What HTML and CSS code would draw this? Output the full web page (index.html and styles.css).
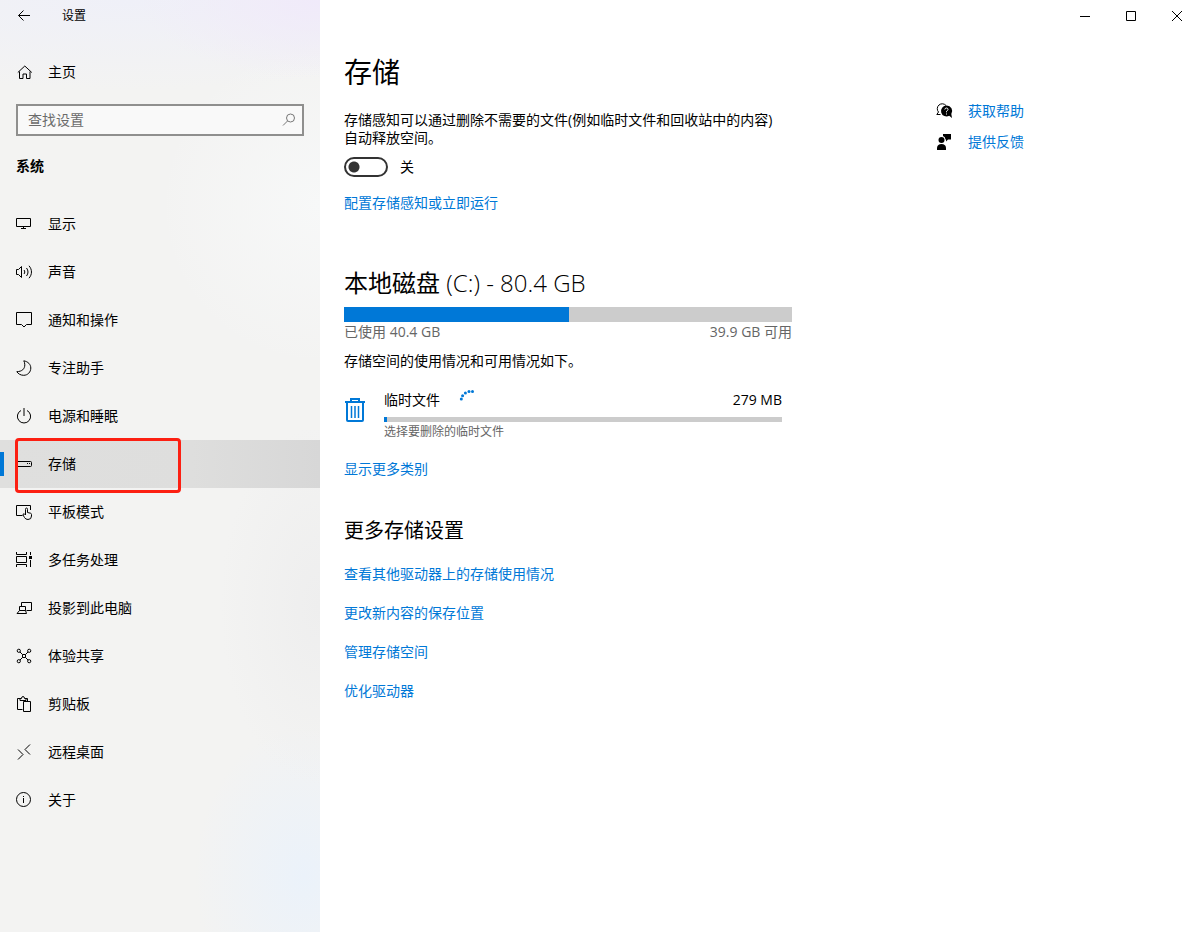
FILE: index.html
```html
<!DOCTYPE html>
<html lang="zh-CN">
<head>
    <meta charset="UTF-8">
    <meta name="viewport" content="width=device-width, initial-scale=1.0">
    <title>设置</title>
    <link rel="stylesheet" href="styles.css">
</head>
<body>

    <div class="window">
        <aside class="sidebar">
            <div class="titlebar">
                <button class="back" aria-label="返回">
                    <svg class="icon" viewBox="0 0 16 16"><path d="M14 7.500H2.500M7.500 2.500l-5 5 5 5"/></svg>
                </button>
                <span class="app-title">设置</span>
            </div>

            <a class="home" href="#">
                <svg class="icon" viewBox="0 0 16 16"><path d="M1.800 8.500L8.800 2l7 6.500M3.500 7.500v7h3.500v-4.500h3.500v4.500h3.500v-7"/></svg>
                <span>主页</span>
            </a>

            <div class="search">
                <input type="text" id="search-text" placeholder="查找设置" aria-label="查找设置">
                <button aria-label="搜索">
                    <svg class="icon" viewBox="0 0 16 16"><circle cx="10.500" cy="6" r="4"/><path d="M7.500 9L3 13.500"/></svg>
                </button>
            </div>

            <h2 class="group">系统</h2>

            <nav class="menu">
                <a href="#">
                    <svg class="icon" viewBox="0 0 16 16"><path d="M.5 2.500h14v8H.5zM7.500 10.500v2M5 12.500h5"/></svg>
                    <span>显示</span>
                </a>
                <a href="#">
                    <svg class="icon" viewBox="0 0 16 16"><path d="M.5 5.500H2.500L5.500 2.500v11l-3-3H.5zM8 6c1 1.200 1 2.800 0 4M10.500 4c2 2.400 2 5.600 0 8M13 1.800c3.300 3.700 3.300 8.700 0 12.400"/></svg>
                    <span>声音</span>
                </a>
                <a href="#">
                    <svg class="icon" viewBox="0 0 16 16"><path d="M.5 .5h15v12h-5L8 15l-2.500-2.500h-5z"/></svg>
                    <span>通知和操作</span>
                </a>
                <a href="#">
                    <svg class="icon" viewBox="0 0 16 16"><path d="M7.800 .8c4.200.8 7 3.600 7 7.200 0 4-3 7.300-7.100 7.300-3 0-5.500-1.400-6.900-3.600C6 11.500 8.800 9 8.800 4.800 8.800 3.300 8.400 2 7.800.8z"/></svg>
                    <span>专注助手</span>
                </a>
                <a href="#">
                    <svg class="icon" viewBox="0 0 16 16"><path d="M8 0v8M5 2.500a6.600 6.600 0 1 0 6 0"/></svg>
                    <span>电源和睡眠</span>
                </a>
                <a href="#" class="active" aria-current="page">
                    <svg class="icon" viewBox="0 0 16 16"><path d="M.5 5.500h14q1 0 1 1v3q0 1-1 1H.5zM11 7.500h1M13 7.500h1"/></svg>
                    <span>存储</span>
                </a>
                <a href="#">
                    <svg class="icon" viewBox="0 0 16 16"><path d="M6.500 11.500h-6v-10h14V6M9.500 11V5.500q0-1.500 1-1.500t1 1.500V8.500l3 .7q1 .3 1 1.300v1.500q0 3.500-3.500 3.500-2.500 0-3.500-2L7 11q0-1.500 1.300-1.200l1.200 1.200"/></svg>
                    <span>平板模式</span>
                </a>
                <a href="#">
                    <svg class="icon" viewBox="0 0 16 16"><path d="M.5 0v2.500h10V0M.5 4.500h10v6H.5zM.5 15v-2.500h10V15M14.500 0v3M14.500 8v7"/><path class="fill" d="M13 4h3v3h-3z"/></svg>
                    <span>多任务处理</span>
                </a>
                <a href="#">
                    <svg class="icon" viewBox="0 0 16 16"><path d="M5.500 6V2.500h10v8h-5M3.500 6.500h6v4h-6zM3.500 10.500L1 13.500h9.500l-1-3"/></svg>
                    <span>投影到此电脑</span>
                </a>
                <a href="#">
                    <svg class="icon" viewBox="0 0 16 16"><circle cx="2.800" cy="2.800" r="1.600"/><circle cx="13.200" cy="2.800" r="1.600"/><circle cx="2.800" cy="13.200" r="1.600"/><circle cx="13.200" cy="13.200" r="1.600"/><path d="M6.500 6.500h3v3h-3zM4 4l2.500 2.500M12 4L9.500 6.500M4 12l2.500-2.500M12 12L9.500 9.500"/></svg>
                    <span>体验共享</span>
                </a>
                <a href="#">
                    <svg class="icon" viewBox="0 0 16 16"><path d="M6.500 13.500h-5v-11h3M9.500 2.500h2v3M4 4.500v-2h1.500q0-2 1.500-2t1.500 2H10v2zM7.500 5.500h7v10h-7z"/></svg>
                    <span>剪贴板</span>
                </a>
                <a href="#">
                    <svg class="icon" viewBox="0 0 16 16"><path d="M2 5.500l5 5-5 5M14 .5l-5 5 5 5"/></svg>
                    <span>远程桌面</span>
                </a>
                <a href="#">
                    <svg class="icon" viewBox="0 0 16 16"><circle cx="7.500" cy="7.500" r="7"/><path d="M7.500 6v5M7.500 4v1"/></svg>
                    <span>关于</span>
                </a>
            </nav>
        </aside>

        <div class="page">
            <div class="window-buttons">
                <button aria-label="最小化"><svg class="icon" viewBox="0 0 16 16"><path d="M3 8.500h10"/></svg></button>
                <button aria-label="最大化"><svg class="icon" viewBox="0 0 16 16"><path d="M3.500 3.500h9v9h-9z"/></svg></button>
                <button aria-label="关闭"><svg class="icon" viewBox="0 0 16 16"><path d="M3 3l10 10M13 3L3 13"/></svg></button>
            </div>

            <div class="columns">
                <main class="content">
                    <h1>存储</h1>
                    <p class="intro">存储感知可以通过删除不需要的文件(例如临时文件和回收站中的内容)自动释放空间。</p>
                    <div class="toggle">
                        <input type="checkbox" id="sense" role="switch">
                        <label for="sense">关</label>
                    </div>
                    <a class="link" href="#">配置存储感知或立即运行</a>

                    <section class="disk">
                        <h2>本地磁盘 <span class="light">(C:) - 80.4 GB</span></h2>
                        <div class="bar"><div class="bar-used" style="width: 50.3%"></div></div>
                        <div class="usage">
                            <span>已使用 40.4 GB</span>
                            <span>39.9 GB 可用</span>
                        </div>
                        <p class="note">存储空间的使用情况和可用情况如下。</p>

                        <div class="category">
                            <svg class="trash" viewBox="0 0 22 28"><path d="M1 6h20M7 5.500V3h8v2.500M3 6v18q0 1 1 1h14q1 0 1-1V6"/><path class="thin-line" d="M7.500 10v12M11 10v12M14.500 10v12"/></svg>
                            <div class="category-body">
                                <div class="category-head">
                                    <span>临时文件</span>
                                    <svg class="spinner" viewBox="0 0 16 16"><circle cx="3.300" cy="9" r="1.500"/><circle cx="4.600" cy="5.800" r="1.500"/><circle cx="7.400" cy="3" r="1.500"/><circle cx="11" cy="1.500" r="1.500"/><circle cx="14.500" cy="1.500" r="1.500"/></svg>
                                    <span class="size">279 MB</span>
                                </div>
                                <div class="bar thin"><div class="bar-used" style="width: 0.7%"></div></div>
                                <p class="hint">选择要删除的临时文件</p>
                            </div>
                        </div>
                        <a class="link" href="#">显示更多类别</a>
                    </section>

                    <section class="more">
                        <h3>更多存储设置</h3>
                        <a class="link" href="#">查看其他驱动器上的存储使用情况</a>
                        <a class="link" href="#">更改新内容的保存位置</a>
                        <a class="link" href="#">管理存储空间</a>
                        <a class="link" href="#">优化驱动器</a>
                    </section>
                </main>

                <aside class="support">
                    <a class="link" href="#">
                        <svg class="icon" viewBox="0 0 16 16"><path d="M2.500 9A4.800 4.800 0 1 1 10 2.500M2.500 9L.8 11.500h3.700"/><path class="fill" d="M10.500 2.500a5.500 5.500 0 1 0 2.700 10.300L16 15l-.7-4A5.500 5.500 0 0 0 10.500 2.500z"/><path class="knock" d="M8.800 6.500q.2-1.500 1.700-1.500T12 6.500q0 .8-1.500 1.800v1M10.500 10.500v1"/></svg>
                        <span>获取帮助</span>
                    </a>
                    <a class="link" href="#">
                        <svg class="icon" viewBox="0 0 16 16"><path class="fill" d="M7 0h8v5.500h-3L10 7.500v-2H9.500A4 4 0 0 0 7 2z"/><circle class="fill" cx="5.500" cy="6" r="3"/><path class="fill" d="M1 16v-2.500Q1.500 10 5.500 10t4.500 3.500V16z"/></svg>
                        <span>提供反馈</span>
                    </a>
                </aside>
            </div>
        </div>
    </div>

</body>
</html>
```
FILE: styles.css
```css
*, *::before, *::after {
    box-sizing: border-box;
}
body {
    margin: 0;
    font-family: "Open Sans", "Noto Sans CJK SC", sans-serif;
    font-size: 14px;
    line-height: 20px;
    color: #000;
    background: #fff;
}
h1, h2, h3, p {
    margin: 0;
    font-weight: 400;
}
a {
    color: inherit;
    text-decoration: none;
}
button {
    display: flex;
    align-items: center;
    justify-content: center;
    padding: 0;
    border: none;
    background: none;
    color: inherit;
}
.icon {
    flex: none;
    width: 16px;
    height: 16px;
    fill: none;
    stroke: #000;
    overflow: visible;
}
.icon .fill {
    fill: #000;
    stroke: none;
}
.icon .knock {
    stroke: #fff;
}
.window {
    display: grid;
    grid-template-columns: 320px 1fr;
    min-height: 100vh;
}

/* Sidebar */
.sidebar {
    background:
        radial-gradient(ellipse 180px 80px at 100% 0, #f0eafa, transparent),
        radial-gradient(ellipse 400px 90px at 40% 0, #eff0f8, transparent),
        radial-gradient(ellipse 160px 160px at 100% 22%, #f7f8f8, transparent),
        radial-gradient(ellipse 100px 180px at 100% 65%, #eeeeee, transparent),
        radial-gradient(ellipse 110px 150px at 95% 94%, #ebf2fa, transparent),
        #f3f3f2;
}
.titlebar {
    display: flex;
    align-items: center;
    height: 32px;
}
.back {
    width: 48px;
    height: 32px;
}
.app-title {
    padding-left: 14px;
    font-size: 12px;
}
.home {
    display: flex;
    align-items: center;
    gap: 16px;
    height: 48px;
    margin-top: 16px;
    padding: 0 16px;
}
.search {
    display: flex;
    height: 32px;
    margin: 8px 16px 0;
    border: 2px solid #8f8f8e;
    background: #f9f9f9;
}
.search input {
    flex: 1;
    min-width: 0;
    padding: 0 10px;
    border: none;
    outline: none;
    background: none;
    font: inherit;
}
.search input::placeholder {
    color: #6b6b6b;
    opacity: 1;
}
.search button {
    width: 28px;
}
.search .icon {
    stroke: #777;
}
.group {
    margin: 20px 16px 0;
    font-size: 14px;
    font-weight: 700;
}
.menu {
    margin-top: 24px;
}
.menu a {
    display: flex;
    align-items: center;
    gap: 16px;
    height: 48px;
    padding: 0 16px;
}
.menu .active {
    position: relative;
    background: linear-gradient(90deg, #dfdfde, #dededd 60%, #d7d7d7);
}
.menu .active::before {
    content: "";
    position: absolute;
    left: 0;
    top: 12px;
    width: 4px;
    height: 24px;
    background: #0078d7;
}
/* highlight frame around the current entry */
.menu .active::after {
    content: "";
    position: absolute;
    left: 15px;
    top: -2px;
    width: 166px;
    height: 55px;
    border: 3px solid #fc1f12;
    border-radius: 4px;
}

/* Page */
.window-buttons {
    display: flex;
    justify-content: flex-end;
}
.window-buttons button {
    width: 46px;
    height: 32px;
}
.columns {
    display: flex;
    gap: 144px;
    padding: 20px 24px 24px;
}
.content {
    flex: 0 1 448px;
}
.link {
    color: #0078d7;
}
.link:hover {
    color: #666;
}
h1 {
    font-size: 28px;
    line-height: 40px;
}
.intro {
    max-width: 440px;
    margin-top: 19px;
    line-height: 18px;
}
.toggle {
    display: flex;
    align-items: center;
    gap: 12px;
    margin: 10px 0 16px;
}
.toggle input {
    appearance: none;
    width: 44px;
    height: 20px;
    margin: 0;
    border: 2px solid #333;
    border-radius: 10px;
    background: radial-gradient(circle at 8px 8px, #333 5px, transparent 6px);
}
.disk {
    margin-top: 54px;
}
.disk h2 {
    font-size: 24px;
    line-height: 32px;
}
.light {
    font-weight: 300;
}
.bar {
    height: 15px;
    margin-top: 8px;
    background: #ccc;
}
.bar-used {
    height: 100%;
    background: #0078d7;
}
.usage {
    display: flex;
    justify-content: space-between;
    color: #666;
}
.note {
    margin-top: 9px;
}
.category {
    display: flex;
    gap: 18px;
    margin: 19px 10px 17px 0;
}
.trash {
    flex: none;
    width: 22px;
    height: 28px;
    margin-top: 6px;
    fill: none;
    stroke: #0078d7;
    stroke-width: 2;
}
.trash .thin-line {
    stroke-width: 1.5;
}
.category-body {
    flex: 1;
}
.category-head {
    display: flex;
    gap: 18px;
}
.spinner {
    width: 16px;
    height: 16px;
    fill: #0078d7;
}
.size {
    margin-left: auto;
}
.thin {
    height: 5px;
    margin-top: 7px;
}
.hint {
    font-size: 12px;
    color: #666;
}
.more {
    display: flex;
    flex-direction: column;
    align-items: flex-start;
    gap: 19px;
    margin-top: 38px;
}
.more h3 {
    font-size: 20px;
    line-height: 28px;
}
.support {
    display: flex;
    flex-direction: column;
    gap: 11px;
    padding-top: 49px;
}
.support .link {
    display: flex;
    align-items: center;
    gap: 16px;
}
```
